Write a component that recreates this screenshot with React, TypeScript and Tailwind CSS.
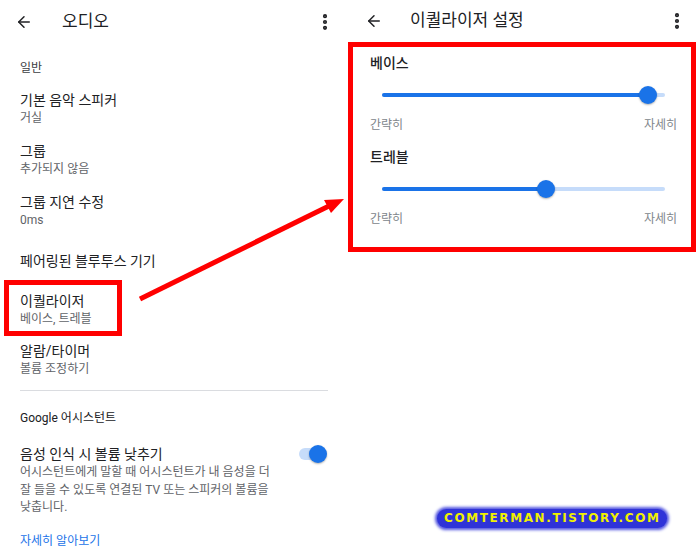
import React from 'react';
import { ArrowLeft, EllipsisVertical } from 'lucide-react';

function Item({ title, sub }: { title: string; sub: string }) {
    return (
        <div className="px-5 pt-[7px] pb-[7px]">
            <div className="text-[14px] leading-[20px] text-[#202124]">{title}</div>
            <div className="text-[12px] leading-[17px] text-[#5f6368]">{sub}</div>
        </div>
    );
}

function Slider({ value }: { value: number }) {
    return (
        <div className="relative ml-[29px] h-5 w-[283px]">
            <div className="absolute left-0 right-0 top-[8px] h-[4px] rounded-full bg-[#c6dcfa]" />
            <div className="absolute left-0 top-[8px] h-[4px] rounded-full bg-[#1a73e8]" style={{ width: `${value}%` }} />
            <div
                className="absolute top-[1px] h-[18px] w-[18px] -translate-x-1/2 rounded-full bg-[#1a73e8] shadow-[0_1px_2px_rgba(0,0,0,0.3)]"
                style={{ left: `${value}%` }}
            />
        </div>
    );
}

function SliderBlock({ label, value, first }: { label: string; value: number; first?: boolean }) {
    return (
        <div>
            <div className={`${first ? 'mt-[6px]' : 'mt-[13px]'} pl-[17px] text-[14px] font-medium leading-[20px] text-[#202124]`}>{label}</div>
            <div className="mt-[12px]">
                <Slider value={value} />
            </div>
            <div className="mt-[11px] flex justify-between pl-[17px] pr-[14px] text-[12px] leading-[18px] text-[#80868b]">
                <span>간략히</span>
                <span>자세히</span>
            </div>
        </div>
    );
}

export default function App() {
    return (
        <div className="relative h-[549px] w-[700px] overflow-hidden bg-white font-['Roboto','Noto_Sans_CJK_KR',sans-serif]">
            <div className="flex flex-row">
                {/* left phone screen */}
                <div className="w-[350px]">
                    <div className="flex h-11 items-center">
                        <ArrowLeft className="ml-[15px] text-[#202124]" size={18} strokeWidth={2} />
                        <div className="ml-[29px] text-[17px] text-[#202124]">오디오</div>
                        <EllipsisVertical className="ml-auto mr-[15px] text-[#202124]" size={20} strokeWidth={3} />
                    </div>
                    <div className="mt-[14px] px-5 text-[12px] leading-[20px] text-[#3c4043]">일반</div>
                    <div className="mt-[5px]">
                        <Item title="기본 음악 스피커" sub="거실" />
                        <Item title="그룹" sub="추가되지 않음" />
                        <Item title="그룹 지연 수정" sub="0ms" />
                    </div>
                    <div className="px-5 pt-[15px] pb-[9px] text-[14px] leading-[20px] text-[#202124]">페어링된 블루투스 기기</div>
                    <div className="ml-[4px] w-[118px] border-[5px] border-[#ff0000] pt-[6px] pb-[3px] pl-[11px]">
                        <div className="text-[14px] leading-[20px] text-[#202124]">이퀄라이저</div>
                        <div className="text-[12px] leading-[17px] text-[#5f6368]">베이스, 트레블</div>
                    </div>
                    <div className="mt-[5px] px-5">
                        <div className="text-[14px] leading-[20px] text-[#202124]">알람/타이머</div>
                        <div className="text-[12px] leading-[17px] text-[#5f6368]">볼륨 조정하기</div>
                    </div>
                    <div className="mx-5 mt-[12px] h-px w-[308px] bg-[#dadce0]" />
                    <div className="mt-[17px] px-5 text-[12px] leading-[20px] text-[#202124]">Google 어시스턴트</div>
                    <div className="mt-[16px] flex px-5">
                        <div className="w-[250px]">
                            <div className="text-[14px] leading-[20px] text-[#202124]">음성 인식 시 볼륨 낮추기</div>
                            <div className="text-[12px] leading-[17.5px] text-[#5f6368]">
                                어시스턴트에게 말할 때 어시스턴트가 내 음성을 더<br />
                                잘 들을 수 있도록 연결된 TV 또는 스피커의 볼륨을<br />
                                낮춥니다.
                            </div>
                        </div>
                        <div className="relative ml-auto mr-[3px] mt-[1px] h-[18px] w-[28px]">
                            <div className="absolute left-0 right-[2px] top-[3px] h-[12px] rounded-full bg-[#c6dcfa]" />
                            <div className="absolute right-0 top-0 h-[18px] w-[18px] rounded-full bg-[#1a73e8] shadow-[0_1px_2px_rgba(0,0,0,0.3)]" />
                        </div>
                    </div>
                    <div className="mt-[14px] px-5 text-[12px] leading-[20px] text-[#1a73e8]">자세히 알아보기</div>
                </div>

                {/* right phone screen */}
                <div className="w-[350px]">
                    <div className="flex h-[42px] items-center">
                        <ArrowLeft className="ml-[15px] text-[#202124]" size={18} strokeWidth={2} />
                        <div className="ml-[27px] text-[17px] text-[#202124]">이퀄라이저 설정</div>
                        <EllipsisVertical className="ml-auto mr-[13px] text-[#202124]" size={20} strokeWidth={3} />
                    </div>
                    <div className="-ml-[2px] h-[210px] w-[348px] border-[5px] border-[#ff0000]">
                        <SliderBlock label="베이스" value={94} first />
                        <SliderBlock label="트레블" value={58} />
                    </div>
                </div>
            </div>

            {/* annotation arrow */}
            <svg className="pointer-events-none absolute left-0 top-0" width="700" height="549">
                <line x1="140" y1="299" x2="329" y2="206" stroke="#ff0000" strokeWidth="5" />
                <polygon points="344,199 331,213 324,200" fill="#ff0000" />
            </svg>

            {/* watermark */}
            <div className="absolute left-[437px] top-[509px] rounded-full bg-[#2f33d8] px-[7px] py-[1px] text-[12px] font-bold leading-[17px] tracking-[1.6px] text-[#f0f000] shadow-[0_0_3px_2px_#5558e0] font-['DejaVu_Sans',sans-serif]">
                COMTERMAN.TISTORY.COM
            </div>
        </div>
    );
}
